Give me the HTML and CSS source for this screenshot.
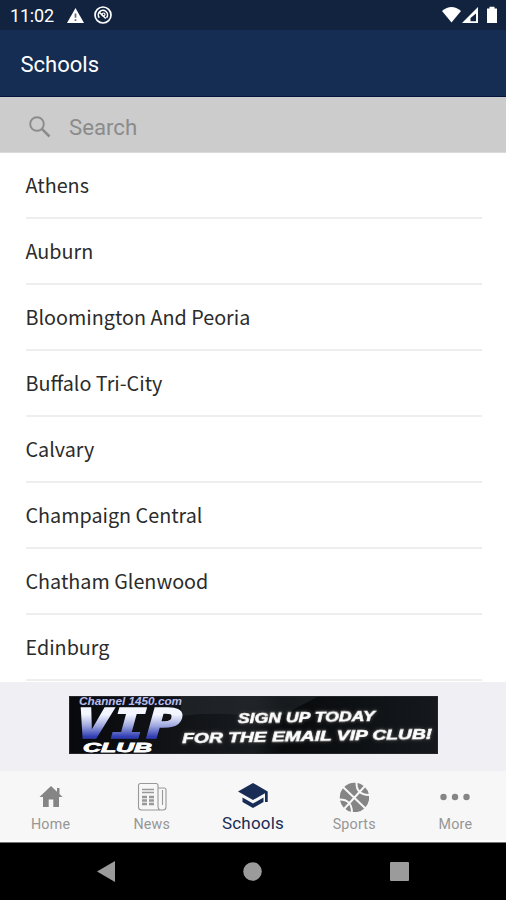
FILE: index.html
```html
<!DOCTYPE html>
<html lang="en">
<head>
<meta charset="utf-8">
<title>Schools</title>
<link rel="stylesheet" href="styles.css">
</head>
<body>
<div class="status">
  <span class="clock">11:02</span>
  <svg class="warn" width="17" height="15" viewBox="0 0 17 15"><path d="M8.500 0 17 15H0Z" fill="#fff"/><path d="M8.500 5.500v4.300M8.500 11.200v1.800" stroke="#5b6980" stroke-width="1.700"/></svg>
  <svg class="dnd" width="18" height="18" viewBox="0 0 18 18" fill="none" stroke="#fff"><circle cx="9" cy="9" r="8" stroke-width="1.700"/><path d="M5.300 11.800A4.600 4.600 0 1 1 12.600 11.700M5.500 6.500l6.300 6" stroke-width="1.600"/><circle cx="9.500" cy="8.500" r="1.500" stroke-width="1.200"/></svg>
  <svg class="signals" width="56" height="18" viewBox="0 0 56 18" fill="#fff"><path d="M0 5Q9.500-3 19 5L9.500 16.500Z"/><path fill-rule="evenodd" d="M20 17 36 1V17ZM28.500 15.300h5.500V7.500L28.500 12Z"/><path d="M45 2.500h2.500V.7h5v1.800h2.500V17H45Z"/></svg>
</div>
<header class="title">Schools</header>
<div class="search">
  <svg width="22" height="22" viewBox="0 0 22 22" fill="none" stroke="#8b8b8b"><circle cx="8" cy="8" r="6.800" stroke-width="1.900"/><path d="m13 13 7.500 7.500" stroke-width="2.500"/></svg>
  <span>Search</span>
</div>
<ul class="list">
  <li>Athens</li>
  <li>Auburn</li>
  <li>Bloomington And Peoria</li>
  <li>Buffalo Tri-City</li>
  <li>Calvary</li>
  <li>Champaign Central</li>
  <li>Chatham Glenwood</li>
  <li>Edinburg</li>
</ul>
<div class="ad">
  <svg class="banner" width="369" height="58" viewBox="0 0 369 58">
    <defs>
      <linearGradient id="bg" x2="1" y2="0"><stop offset="0" stop-color="#08090c"/><stop offset=".5" stop-color="#171a1e"/><stop offset=".58" stop-color="#080a0c"/><stop offset="1" stop-color="#15191d"/></linearGradient>
      <linearGradient id="vip" gradientUnits="userSpaceOnUse" x1="0" y1="12" x2="0" y2="44"><stop offset=".2" stop-color="#f4f6ff"/><stop offset=".55" stop-color="#a0a9df"/><stop offset=".9" stop-color="#303db3"/></linearGradient>
    </defs>
    <rect width="369" height="58" fill="url(#bg)"/>
    <path d="M112 0H250L205 24Q160 14 112 20Z" fill="#30353a" opacity=".4"/>
    <g class="display">
      <text class="vip" x="7" y="42" textLength="106" lengthAdjust="spacingAndGlyphs">VIP</text>
      <text class="site" x="10" y="9" textLength="103" lengthAdjust="spacingAndGlyphs">Channel 1450.com</text>
      <text class="club" x="14" y="56" textLength="69" lengthAdjust="spacingAndGlyphs">CLUB</text>
      <g transform="rotate(-1 240 30)">
        <g class="pitch glow">
          <text x="169" y="26" textLength="137" lengthAdjust="spacingAndGlyphs">SIGN UP TODAY</text>
          <text x="113" y="45" textLength="250" lengthAdjust="spacingAndGlyphs">FOR THE EMAIL VIP CLUB!</text>
        </g>
      </g>
    </g>
    <rect x=".5" y=".5" width="368" height="57" fill="none" stroke="#25262a"/>
  </svg>
</div>
<nav class="tabs">
  <a><svg width="30" height="30" viewBox="0 0 30 30"><path d="M15 4 3.500 15H7v10h5.700v-7.500h4.600V25H23V15h3.500L23.500 12V6h-2.500v3.800Z" fill="#858585"/></svg><span>Home</span></a>
  <a><svg width="30" height="30" viewBox="0 0 30 30" fill="none" stroke="#999"><path d="M21 24V3.500Q21 1.500 19 1.500H3.500Q1.500 1.500 1.500 3.500V25Q1.500 28 4.500 28H26Q29 28 29 25V8Q29 6 27 6H21M21 24Q21 28 24 28M25.500 8V23" stroke-width="1.100"/><path d="M5 7.500H17M5 10.500H17" stroke-width="1.500"/><path d="M5 15h5M12 15h5M5 18.500h5M12 18.500h5M5 22h5M12 22h5" stroke-width="2.400"/></svg><span>News</span></a>
  <a class="active"><svg width="30" height="30" viewBox="0 0 30 30" fill="#182c55"><path d="M15 1 0 9.500 15 18l12-6.800V20h2.700V9.500Z"/><path d="M4.500 15.500 15 21.500l10.500-6V20L15 26 4.500 20Z"/></svg><span>Schools</span></a>
  <a><svg width="30" height="30" viewBox="0 0 30 30"><circle cx="15.500" cy="15.500" r="14.700" fill="#858585"/><path d="M4 5 27 27M5 27 26 4M17.500 0Q17 13 30.500 13M0 17.500Q13 17 13 31" fill="none" stroke="#f7f7f7" stroke-width="2"/></svg><span>Sports</span></a>
  <a><svg width="30" height="30" viewBox="0 0 30 30" fill="#858585"><circle cx="3.500" cy="15" r="3.200"/><circle cx="15" cy="15" r="3.200"/><circle cx="26.500" cy="15" r="3.200"/></svg><span>More</span></a>
</nav>
<div class="system">
  <svg width="18" height="21" viewBox="0 0 18 21"><path d="M0 10.500 18 0V21Z"/></svg>
  <svg width="19" height="19" viewBox="0 0 19 19"><circle cx="9.500" cy="9.500" r="9.300"/></svg>
  <svg width="19" height="19" viewBox="0 0 19 19"><rect width="19" height="19" rx="1"/></svg>
</div>
</body>
</html>
```
FILE: styles.css
```css
* { box-sizing: border-box; }
body { margin: 0; width: 506px; height: 900px; overflow: hidden; background: #fff; font-family: Roboto, sans-serif; display: flex; flex-direction: column; }
svg { display: block; flex: none; }
.status { height: 30px; background: #11233f; color: #fff; display: flex; align-items: center; padding: 0 8px 0 10px; flex: none; }
.clock { font-size: 18px; width: 57px; letter-spacing: -.2px; }
.dnd { margin-left: 10px; }
.signals { margin-left: auto; }
.title { height: 67px; background: #152d52; border-bottom: 1px solid #03143c; color: #fff; font-size: 22px; line-height: 70px; padding-left: 20.500px; flex: none; }
.search { height: 56px; background: #ccc; border-bottom: 1px solid #dadada; display: flex; align-items: center; padding: 5px 0 0 29px; gap: 18px; color: #8b8b8b; font-size: 22.200px; flex: none; }
.list { list-style: none; margin: 0; padding: 0 24.500px 0 25.500px; height: 529px; flex: none; font-family: "Noto Sans CJK SC", sans-serif; font-size: 19.750px; color: #2b2b2b; }
.list li { height: 66.150px; border-bottom: 2px solid #eee; line-height: 64px; }
.list li:first-child { height: 65.500px; line-height: 63px; }
.ad { height: 89px; background: #efeff4; padding: 14px 0 0 69px; flex: none; }
.display { font-family: "Liberation Sans", sans-serif; font-weight: 700; font-style: italic; }
.site { font-size: 10.500px; fill: #b8bde2; stroke: #101535; stroke-width: 1px; paint-order: stroke; }
.vip { font-family: "DejaVu Sans Mono", monospace; font-size: 41px; fill: url(#vip); stroke: url(#vip); stroke-width: 1.500px; }
.club { font-size: 13px; fill: #fff; stroke: #fff; stroke-width: .8px; }
.pitch { font-size: 15.500px; fill: #fff; stroke: #fff; stroke-width: .7px; }
.glow { filter: drop-shadow(0 0 1px #000) drop-shadow(0 0 1.500px #555); }
.tabs { height: 71px; background: #f7f7f7; display: grid; grid-template-columns: repeat(5, 1fr); border-bottom: 2px solid #fff; flex: none; }
.tabs a { display: flex; flex-direction: column; align-items: center; padding-top: 11px; color: #969696; font-size: 14.300px; }
.tabs span { line-height: 20px; margin-top: 2px; letter-spacing: .2px; }
.tabs .active { color: #182c55; font-size: 17px; }
.tabs .active span { margin-top: 1px; }
.system { height: 58px; border-top: 1px solid #777; background: #000; display: flex; align-items: center; justify-content: space-between; padding: 0 97px; fill: #9b9b9b; flex: none; }
```
